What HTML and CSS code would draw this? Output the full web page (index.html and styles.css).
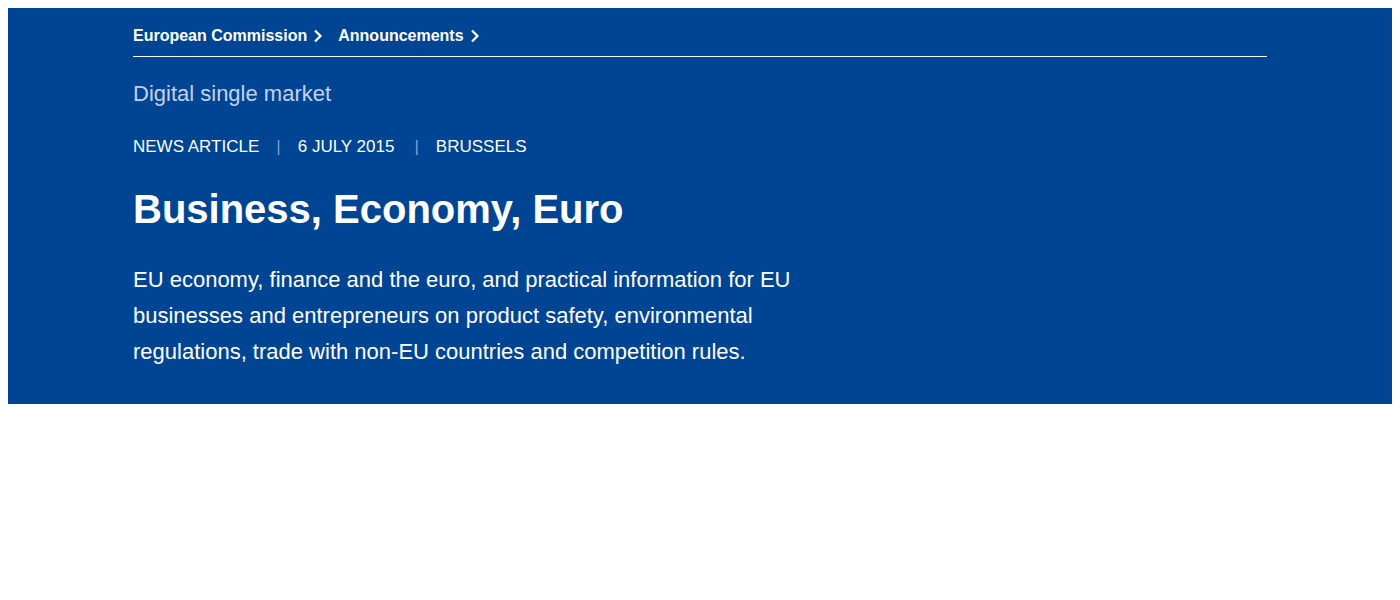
FILE: index.html
```html
<!DOCTYPE html>
<html>
<head>
<meta charset="utf-8">
<link rel="stylesheet" href="styles.css">
</head>
<body>
<header class="hero">
  <div class="container">
    <nav class="breadcrumb">
      <a href="#" class="crumb">European Commission<svg class="chev" viewBox="0 0 10 14" width="10" height="14"><path d="M2 1.5 L7.5 7 L2 12.5" fill="none" stroke="#fff" stroke-width="2.2"/></svg></a>
      <a href="#" class="crumb">Announcements<svg class="chev" viewBox="0 0 10 14" width="10" height="14"><path d="M2 1.5 L7.5 7 L2 12.5" fill="none" stroke="#fff" stroke-width="2.2"/></svg></a>
    </nav>
    <div class="site-name">Digital single market</div>
    <div class="meta">
      <span>NEWS ARTICLE</span><span class="sep">|</span><span>6 JULY 2015</span><span class="sep sep-wide">|</span><span>BRUSSELS</span>
    </div>
    <h1 class="title">Business, Economy, Euro</h1>
    <p class="lead">EU economy, finance and the euro, and practical information for EU businesses and entrepreneurs on product safety, environmental regulations, trade with non-EU countries and competition rules.</p>
  </div>
</header>
</body>
</html>
```
FILE: styles.css
```css
body {
  margin: 8px;
  font-family: Arial, "Liberation Sans", sans-serif;
  background: #fff;
}
.hero {
  background: #004494;
  color: #fff;
  padding: 0 0 34px;
}
.container {
  width: 1134px;
  margin: 0 auto;
}
.breadcrumb {
  display: flex;
  gap: 15px;
  padding: 18px 0 10px;
  border-bottom: 1px solid #fff;
}
.crumb {
  color: #fff;
  text-decoration: none;
  font-weight: bold;
  font-size: 16px;
  line-height: 20px;
  display: flex;
  align-items: center;
  gap: 6px;
}
.site-name {
  color: #c4d2f0;
  font-size: 22px;
  line-height: 28px;
  margin-top: 23px;
}
.meta {
  font-size: 17px;
  line-height: 20px;
  margin-top: 29px;
  display: flex;
}
.sep {
  color: #7f9ed0;
  margin: 0 17px;
}
.sep-wide {
  margin: 0 17px 0 20px;
}
.title {
  font-size: 40px;
  font-weight: bold;
  line-height: 48px;
  margin: 28px 0 0;
}
.lead {
  font-size: 22px;
  line-height: 36px;
  margin: 29px 0 0;
  width: 680px;
}
```
